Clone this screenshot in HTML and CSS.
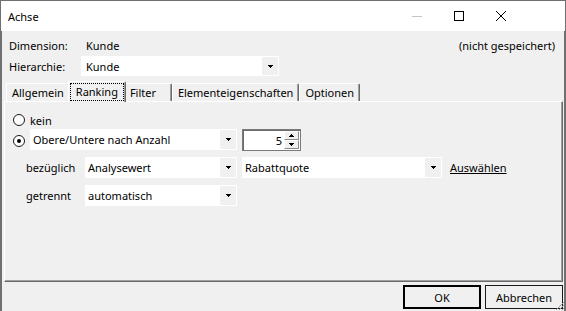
FILE: index.html
```html
<!DOCTYPE html>
<html>
<head>
    <title>Achse</title>
    <link rel="stylesheet" href="styles.css">
</head>
<body>
<div class="window">
    <div class="titlebar">
        <span class="title">Achse</span>
        <div class="caption-buttons">
            <div class="caption-btn">
                <svg width="10" height="10"><path d="M0 5.5h10" stroke="#c4c4c4" stroke-width="1"/></svg>
            </div>
            <div class="caption-btn">
                <svg width="10" height="10"><rect x="0.5" y="0.5" width="9" height="9" fill="none" stroke="#000" stroke-width="1"/></svg>
            </div>
            <div class="caption-btn">
                <svg width="10" height="10"><path d="M0 0L10 10M10 0L0 10" stroke="#000" stroke-width="1"/></svg>
            </div>
        </div>
    </div>

    <div class="body">
        <div class="header">
            <div class="info-row">
                <span class="info-label">Dimension:</span>
                <span class="info-value">Kunde</span>
                <span class="status">(nicht gespeichert)</span>
            </div>
            <div class="info-row hier-row">
                <span class="info-label">Hierarchie:</span>
                <div class="combo combo-hier">
                    <span class="combo-text">Kunde</span>
                    <span class="combo-arrow"><svg width="5" height="3"><path d="M0 0h5v1h-1v1h-1v1h-1v-1h-1v-1h-1z"/></svg></span>
                </div>
            </div>
        </div>

        <div class="tabs">
            <div class="tab">Allgemein</div>
            <div class="tab tab-active"><span class="focus">Ranking</span></div>
            <div class="tab">Filter</div>
            <div class="tab">Elementeigenschaften</div>
            <div class="tab">Optionen</div>
        </div>

        <div class="panel">
            <div class="radio-row">
                <span class="radio"></span>
                <span>kein</span>
            </div>
            <div class="radio-row count-row">
                <span class="radio checked"></span>
                <div class="combo combo-wide">
                    <span class="combo-text">Obere/Untere nach Anzahl</span>
                    <span class="combo-arrow"><svg width="5" height="3"><path d="M0 0h5v1h-1v1h-1v1h-1v-1h-1v-1h-1z"/></svg></span>
                </div>
                <div class="spin">
                    <span class="spin-value">5</span>
                    <div class="spin-buttons">
                        <span class="spin-btn"><svg width="5" height="3"><path d="M2 0h1v1h1v1h1v1h-5v-1h1v-1h1z"/></svg></span>
                        <span class="spin-btn"><svg width="5" height="3"><path d="M0 0h5v1h-1v1h-1v1h-1v-1h-1v-1h-1z"/></svg></span>
                    </div>
                </div>
            </div>
            <div class="field-row">
                <span class="field-label">bezüglich</span>
                <div class="combo combo-mid">
                    <span class="combo-text">Analysewert</span>
                    <span class="combo-arrow"><svg width="5" height="3"><path d="M0 0h5v1h-1v1h-1v1h-1v-1h-1v-1h-1z"/></svg></span>
                </div>
                <div class="combo combo-value">
                    <span class="combo-text">Rabattquote</span>
                    <span class="combo-arrow"><svg width="5" height="3"><path d="M0 0h5v1h-1v1h-1v1h-1v-1h-1v-1h-1z"/></svg></span>
                </div>
                <a class="link" href="#">Auswählen</a>
            </div>
            <div class="field-row">
                <span class="field-label">getrennt</span>
                <div class="combo combo-mid">
                    <span class="combo-text">automatisch</span>
                    <span class="combo-arrow"><svg width="5" height="3"><path d="M0 0h5v1h-1v1h-1v1h-1v-1h-1v-1h-1z"/></svg></span>
                </div>
            </div>
        </div>

        <div class="footer">
            <button class="btn btn-default">OK</button>
            <button class="btn">Abbrechen</button>
        </div>
    </div>

    <svg class="grip" width="10" height="10">
        <path d="M9 1L1 9M9 4L4 9M9 7L7 9" stroke="#9a9a9a" stroke-width="1"/>
    </svg>
</div>
</body>
</html>
```

FILE: styles.css
```css
* {
    box-sizing: border-box;
}

body {
    margin: 0;
    font-family: "Noto Sans", sans-serif;
    font-size: 11px;
    color: #000;
    background-color: #f0f0f0;
}

.window {
    position: relative;
    width: 566px;
    height: 311px;
    display: flex;
    flex-direction: column;
    border: 1px solid #707070;
    border-bottom: none;
    background-color: #f0f0f0;
    overflow: hidden;
}

.titlebar {
    height: 30px;
    flex-shrink: 0;
    display: flex;
    align-items: center;
    background-color: #fff;
}

.title {
    flex: 1;
    padding-left: 7px;
}

.caption-buttons {
    display: flex;
    margin-right: 43px;
}

.caption-btn {
    width: 42px;
    height: 30px;
    display: flex;
    align-items: center;
    justify-content: center;
}

.caption-btn svg {
    display: block;
}

.body {
    flex: 1;
    display: flex;
    flex-direction: column;
    border-left: 1px solid #707070;
    border-right: 1px solid #707070;
}

.header {
    padding: 4px 9px 0 7px;
}

.info-row {
    display: flex;
    align-items: center;
    height: 20px;
}

.hier-row {
    margin-top: 1px;
}

.info-label {
    width: 72px;
}

.info-value {
    flex: 1;
    padding-left: 5px;
}

/* combo boxes */
.combo {
    height: 21px;
    display: flex;
    align-items: stretch;
    background-color: #fff;
    border: 1px solid #fff;
}

.combo-text {
    flex: 1;
    display: flex;
    align-items: center;
    padding-left: 2px;
    white-space: nowrap;
}

.combo-arrow {
    width: 16px;
    display: flex;
    align-items: center;
    justify-content: center;
    background-color: #f0f0f0;
}

.combo-arrow svg,
.spin-btn svg {
    display: block;
}

.combo-hier {
    width: 198px;
    height: 20px;
}

.combo-hier .combo-text {
    padding-left: 4px;
}

.combo-wide {
    width: 207px;
}

.combo-mid {
    width: 152px;
}

.combo-value {
    width: 200px;
    margin-left: 5px;
}

/* tabs */
.tabs {
    display: flex;
    align-items: flex-end;
    height: 20px;
    margin-top: 5px;
    padding-left: 4px;
}

.tab {
    height: 18px;
    min-width: 48px;
    display: flex;
    align-items: center;
    padding: 0 5px;
    border-top: 1px solid #fff;
    border-left: 1px solid #fff;
    border-right: 1px solid #696969;
    border-radius: 2px 2px 0 0;
    box-shadow: inset -1px 0 #a0a0a0;
    background-color: #f0f0f0;
    white-space: nowrap;
}

.tab-active {
    position: relative;
    z-index: 1;
    height: 21px;
    margin: 0 -2px -1px;
    padding: 0 1px 1px 1px;
}

.focus {
    height: 18px;
    display: flex;
    align-items: center;
    padding: 0 5px;
    border: 1px dotted #000;
}

.panel {
    height: 181px;
    margin: 0 1px 0 2px;
    padding: 10px 0 0 8px;
    border-top: 1px solid #fff;
    border-left: 1px solid #fff;
    border-right: 1px solid #696969;
    border-bottom: 1px solid #696969;
    box-shadow: inset -1px -1px #a0a0a0;
}

.radio-row {
    display: flex;
    align-items: center;
    height: 16px;
}

.count-row {
    height: 22px;
    margin-top: 1px;
    align-items: flex-start;
}

.count-row .radio {
    margin-top: 6px;
}

.radio {
    position: relative;
    width: 12px;
    height: 12px;
    margin-right: 5px;
    border: 1px solid #1a1a1a;
    border-radius: 50%;
    background-color: #fff;
}

.radio.checked::after {
    content: "";
    position: absolute;
    left: 3px;
    top: 3px;
    width: 4px;
    height: 4px;
    border-radius: 50%;
    background-color: #000;
}

/* spinner */
.spin {
    width: 59px;
    height: 22px;
    margin-left: 5px;
    display: flex;
    background-color: #fff;
    border: 1px solid #7a7a7a;
    box-shadow: inset 1px 1px #6a6a6a;
}

.spin-value {
    flex: 1;
    display: flex;
    align-items: center;
    justify-content: flex-end;
    padding-right: 2px;
}

.spin-buttons {
    width: 16px;
    display: flex;
    flex-direction: column;
    padding: 1px 1px 1px 0;
}

.spin-btn {
    flex: 1;
    display: flex;
    align-items: center;
    justify-content: center;
    background-color: #f0f0f0;
    border: 1px solid;
    border-color: #fff #8a8a8a #8a8a8a #fff;
}

.field-row {
    display: flex;
    align-items: center;
    height: 21px;
    margin-top: 6px;
    padding-left: 13px;
}

.field-row + .field-row {
    margin-top: 7px;
}

.field-label {
    width: 59px;
}

.link {
    margin-left: 8px;
    color: #000;
    text-decoration: underline;
}

/* footer */
.footer {
    display: flex;
    justify-content: flex-end;
    gap: 4px;
    padding: 3px 1px 0 0;
}

.btn {
    width: 78px;
    height: 24px;
    padding: 0;
    font-family: "Noto Sans", sans-serif;
    font-size: 11px;
    color: #000;
    background-color: #f0f0f0;
    border: 1px solid #1a1a1a;
}

.btn-default {
    border: 2px solid #000;
}

.grip {
    position: absolute;
    right: 0;
    bottom: 0;
}
```
